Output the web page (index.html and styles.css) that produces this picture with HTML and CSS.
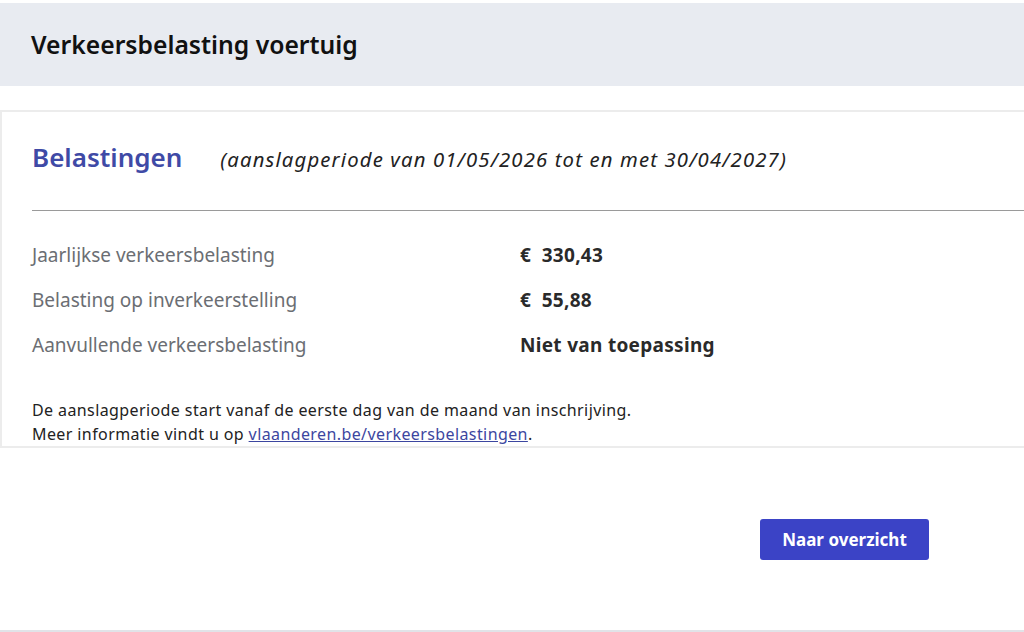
FILE: index.html
```html
<!DOCTYPE html>
<html lang="nl">
<head>
    <meta charset="UTF-8">
    <meta name="viewport" content="width=device-width, initial-scale=1.0">
    <title>Verkeersbelasting voertuig</title>
    <link rel="stylesheet" href="styles.css">
</head>
<body>

    <!-- Page title -->
    <header class="page-head">
        <h1>Verkeersbelasting voertuig</h1>
    </header>

    <!-- Tax overview -->
    <section class="card">
        <div class="card-head">
            <h2>Belastingen</h2>
            <span class="period">(aanslagperiode van 01/05/2026 tot en met 30/04/2027)</span>
        </div>

        <dl class="tax-list">
            <dt>Jaarlijkse verkeersbelasting</dt>
            <dd>€&nbsp; 330,43</dd>
            <dt>Belasting op inverkeerstelling</dt>
            <dd>€&nbsp; 55,88</dd>
            <dt>Aanvullende verkeersbelasting</dt>
            <dd>Niet van toepassing</dd>
        </dl>

        <p class="note">
            De aanslagperiode start vanaf de eerste dag van de maand van inschrijving.<br>
            Meer informatie vindt u op <a href="#">vlaanderen.be/verkeersbelastingen</a>.
        </p>
    </section>

    <div class="actions">
        <button class="btn-primary">Naar overzicht</button>
    </div>

</body>
</html>
```

FILE: styles.css
```css
body {
    font-family: "Noto Sans", "Open Sans", sans-serif;
    margin: 0;
    padding: 0;
    background-color: #fff;
    color: #111;
    min-height: 632px;
    box-sizing: border-box;
    border-bottom: 2px solid #e1e3e8;
}

.page-head {
    background-color: #e8ebf1;
    margin-top: 3px;
    height: 83px;
    padding-left: 31px;
    display: flex;
    align-items: center;
}

.page-head h1 {
    margin: 0;
    font-size: 24.7px;
    font-weight: 600;
    color: #111;
}

.card {
    margin-top: 24px;
    border-top: 2px solid #ececec;
    border-left: 2px solid #ececec;
    border-bottom: 2px solid #ececec;
    padding-left: 30px;
}

.card-head {
    display: flex;
    align-items: baseline;
    height: 99px;
    box-sizing: border-box;
    padding-top: 27px;
    border-bottom: 1px solid #9a9a9a;
}

.card-head h2 {
    margin: 0 38px 0 0;
    font-size: 26px;
    font-weight: 600;
    color: #3f4aa6;
}

.period {
    font-size: 20.3px;
    font-style: italic;
    letter-spacing: 1.15px;
    color: #222;
}

.tax-list {
    display: grid;
    grid-template-columns: 488px auto;
    margin: 22px 0 0;
}

.tax-list dt,
.tax-list dd {
    margin: 0;
    height: 45px;
    line-height: 45px;
}

.tax-list dt {
    font-size: 19px;
    color: #6b6e73;
}

.tax-list dd {
    font-size: 19px;
    font-weight: 700;
    letter-spacing: 0.3px;
    color: #2a2a2a;
}

.note {
    margin: 30px 0 0;
    padding-bottom: 0;
    font-size: 16px;
    letter-spacing: 0.4px;
    line-height: 24px;
    color: #222;
}

.note a {
    color: #3c46a0;
}

.actions {
    display: flex;
    justify-content: flex-end;
    padding: 71px 95px 0 0;
}

.btn-primary {
    background-color: #3b43c6;
    color: #fff;
    border: none;
    border-radius: 3px;
    width: 169px;
    height: 41px;
    font-family: inherit;
    font-size: 17px;
    font-weight: 700;
    cursor: pointer;
}
```
